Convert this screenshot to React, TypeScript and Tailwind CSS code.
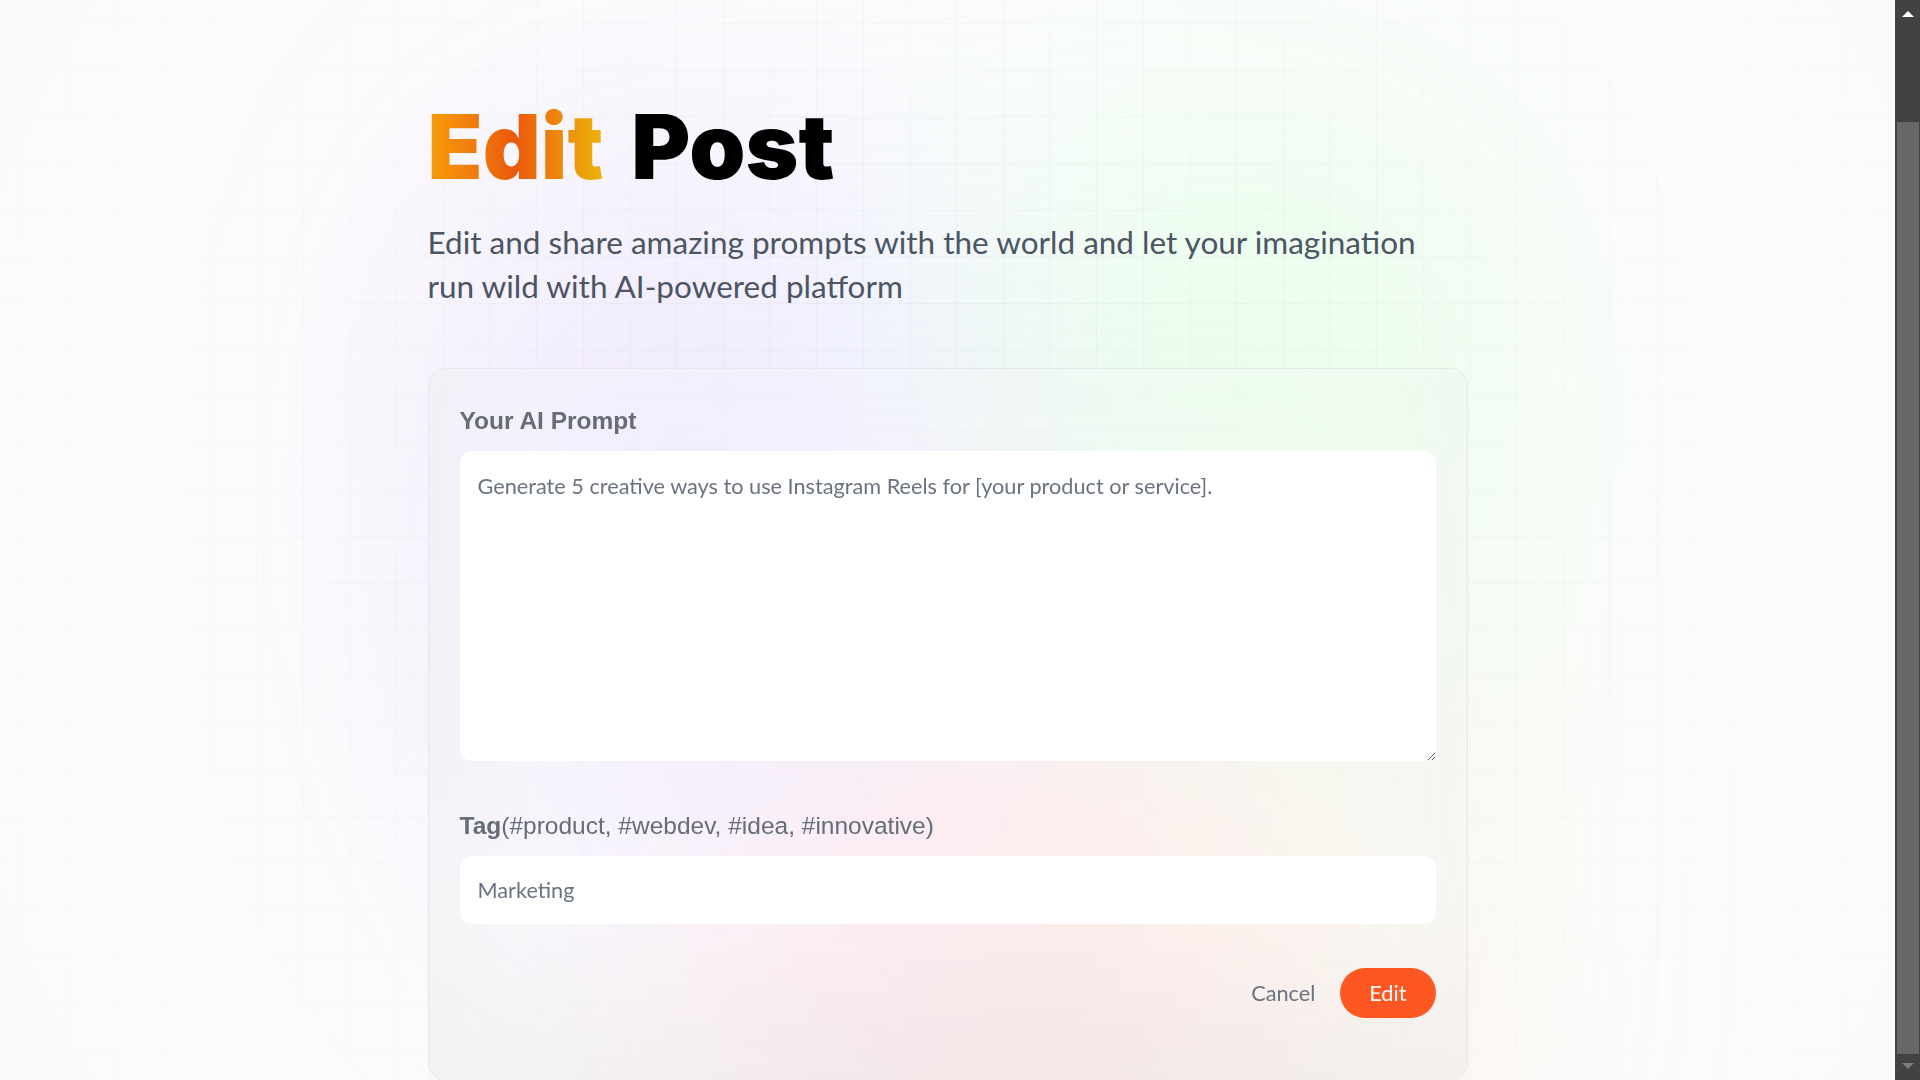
import React from "react";

function Scrollbar() {
  return (
    <div className="relative z-10 flex h-full w-[25px] shrink-0 flex-col bg-[#424242]">
      <div className="flex h-[29px] items-start justify-center pt-[11px] pl-[1px]">
        <div className="h-0 w-0 border-x-[6px] border-b-[6px] border-x-transparent border-b-white" />
      </div>
      <div className="ml-[2px] mr-[1px] mt-[93px] h-[932px] bg-[#686868]" />
      <div className="flex flex-1 items-start justify-center pt-[9px] pl-[1px]">
        <div className="h-0 w-0 border-x-[6px] border-t-[6px] border-x-transparent border-t-[#7a7a7a]" />
      </div>
    </div>
  );
}

export default function App() {
  return (
    <div className="relative flex h-screen w-full overflow-hidden bg-white">
      {/* grid */}
      <div className="absolute inset-0 [background-image:linear-gradient(to_right,rgba(0,0,0,0.045)_1px,transparent_1px),linear-gradient(to_bottom,rgba(0,0,0,0.045)_1px,transparent_1px)] [background-size:46.67px_46.67px] [background-position:23px_23px]" />
      {/* radial fade */}
      <div className="absolute inset-0 [background-image:radial-gradient(circle,rgba(2,0,36,0)_0,#fafafa_100%)]" />
      {/* colour blobs */}
      <div className="absolute inset-0 flex justify-center">
        <div className="mt-[124px] h-full w-full max-w-[992px] opacity-[0.17] blur-[155px] saturate-150 [background-image:radial-gradient(at_27%_37%,hsla(215,98%,61%,1)_0px,transparent_0%),radial-gradient(at_97%_21%,hsla(125,98%,72%,1)_0px,transparent_50%),radial-gradient(at_52%_99%,hsla(354,98%,61%,1)_0px,transparent_50%),radial-gradient(at_10%_29%,hsla(256,96%,67%,1)_0px,transparent_50%),radial-gradient(at_97%_96%,hsla(38,60%,74%,1)_0px,transparent_50%),radial-gradient(at_33%_50%,hsla(222,67%,73%,1)_0px,transparent_50%),radial-gradient(at_79%_53%,hsla(343,68%,79%,1)_0px,transparent_50%)]" />
      </div>

      <main className="relative flex-1 overflow-hidden">
        <div className="mx-auto flex w-[1040px] flex-col pt-[95px]">
          <h1 className="font-['Inter',sans-serif] text-[90px] font-black leading-[103px] tracking-normal text-black [word-spacing:10px]">
            <span className="bg-gradient-to-r from-[#f59e0b] via-[#ea580c] to-[#eab308] bg-clip-text text-transparent">
              Edit
            </span>{" "}
            Post
          </h1>
          <p className="mt-[22px] font-['Lato',sans-serif] text-[31.5px] leading-[44px] text-[#4b5563]">
            Edit and share amazing prompts with the world and let your imagination
            <br />
            run wild with AI-powered platform
          </p>

          <form className="mt-[60px] flex w-[1040px] flex-col rounded-[18px] border border-[#e5e7eb] bg-white/20 px-[31px] pt-[33px] pb-[31px] shadow-[inset_15px_-77px_146px_0_rgba(199,199,199,0.2)] backdrop-blur">
            <label className="flex flex-col">
              <span className="font-['Liberation_Sans',Arial,sans-serif] text-[24.5px] font-bold leading-[37px] text-[#666c78]">
                Your AI Prompt
              </span>
              <textarea
                defaultValue="Generate 5 creative ways to use Instagram Reels for [your product or service]."
                className="mt-[12px] h-[310px] w-full rounded-[12px] bg-white px-[18px] pt-[20px] pb-[18px] font-['Lato',sans-serif] text-[21.7px] leading-[31px] text-[#6b7280] outline-none"
              />
            </label>

            <label className="mt-[46px] flex flex-col">
              <span className="font-['Liberation_Sans',Arial,sans-serif] text-[24.5px] leading-[37px] text-[#666c78]">
                <span className="font-bold">Tag</span>
                (#product, #webdev, #idea, #innovative)
              </span>
              <input
                defaultValue="Marketing"
                className="mt-[12px] h-[68px] w-full rounded-[12px] bg-white px-[18px] font-['Lato',sans-serif] text-[21.7px] text-[#6b7280] outline-none"
              />
            </label>

            <div className="mt-[44px] mb-[31px] flex items-center justify-end gap-[25px]">
              <button
                type="button"
                className="font-['Lato',sans-serif] text-[21.7px] leading-[31px] text-[#6b7280]"
              >
                Cancel
              </button>
              <button
                type="button"
                className="h-[50px] rounded-full bg-[#ff5722] px-[29px] font-['Lato',sans-serif] text-[21.7px] leading-[31px] text-white"
              >
                Edit
              </button>
            </div>
          </form>
        </div>
      </main>

      <Scrollbar />
    </div>
  );
}
